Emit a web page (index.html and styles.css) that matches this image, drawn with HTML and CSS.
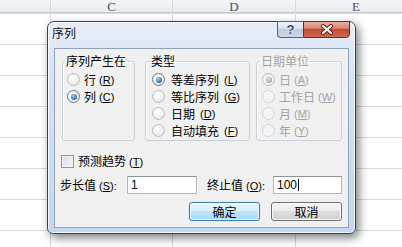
FILE: index.html
```html
<!DOCTYPE html>
<html lang="zh-CN">
<head>
<meta charset="utf-8">
<title>序列</title>
<link rel="stylesheet" href="styles.css">
</head>
<body>
<div class="sheet">
  <div class="grid">
    <div class="hd"></div><div class="hd"><span>C</span></div><div class="hd"><span>D</span></div><div class="hd"><span>E</span></div>
    <div class="c"></div><div class="c"></div><div class="c"></div><div class="c"></div>
    <div class="c"></div><div class="c"></div><div class="c"></div><div class="c"></div>
    <div class="c"></div><div class="c"></div><div class="c"></div><div class="c"></div>
    <div class="c"></div><div class="c"></div><div class="c"></div><div class="c"></div>
    <div class="c"></div><div class="c"></div><div class="c"></div><div class="c"></div>
    <div class="c"></div><div class="c"></div><div class="c"></div><div class="c"></div>
    <div class="c"></div><div class="c"></div><div class="c"></div><div class="c"></div>
    <div class="c"></div><div class="c"></div><div class="c"></div><div class="c"></div>
  </div>

  <div class="dialog">
    <div class="titlebar">
      <span class="title">序列</span>
      <div class="caps">
        <span class="cap help">?</span>
        <span class="cap close">
          <svg width="14" height="11" viewBox="0 0 14 11">
            <path d="M3 2 L11 9 M11 2 L3 9" stroke="#5a1e14" stroke-width="4" stroke-linecap="round"/>
            <path d="M3 2 L11 9 M11 2 L3 9" stroke="#ffffff" stroke-width="2.2" stroke-linecap="round"/>
          </svg>
        </span>
      </div>
    </div>

    <div class="client">
      <div class="groups">
        <fieldset class="grp g1">
          <legend>序列产生在</legend>
          <div class="opt"><span class="radio"></span>行<span class="mn">(<u>R</u>)</span></div>
          <div class="opt"><span class="radio on"></span>列<span class="mn">(<u>C</u>)</span></div>
        </fieldset>
        <fieldset class="grp g2">
          <legend>类型</legend>
          <div class="opt"><span class="radio on"></span>等差序列<span class="mn">(<u>L</u>)</span></div>
          <div class="opt"><span class="radio"></span>等比序列<span class="mn">(<u>G</u>)</span></div>
          <div class="opt"><span class="radio"></span>日期<span class="mn">(<u>D</u>)</span></div>
          <div class="opt"><span class="radio"></span>自动填充<span class="mn">(<u>F</u>)</span></div>
        </fieldset>
        <fieldset class="grp g3 disabled">
          <legend>日期单位</legend>
          <div class="opt"><span class="radio on"></span>日<span class="mn">(<u>A</u>)</span></div>
          <div class="opt"><span class="radio"></span>工作日<span class="mn">(<u>W</u>)</span></div>
          <div class="opt"><span class="radio"></span>月<span class="mn">(<u>M</u>)</span></div>
          <div class="opt"><span class="radio"></span>年<span class="mn">(<u>Y</u>)</span></div>
        </fieldset>
      </div>

      <div class="check"><span class="box"></span><span>预测趋势<span class="mn">(<u>T</u>)</span></span></div>

      <div class="values">
        <span class="lbl">步长值<span class="mn">(<u>S</u>):</span></span>
        <div class="field">1</div>
        <span class="lbl lbl2">终止值<span class="mn">(<u>O</u>):</span></span>
        <div class="field">100<span class="caret"></span></div>
      </div>

      <div class="buttons">
        <div class="btn default">确定</div>
        <div class="btn">取消</div>
      </div>
    </div>
  </div>
</div>
</body>
</html>
```

FILE: styles.css
```css
html, body {
  margin: 0;
  padding: 0;
}

body {
  width: 402px;
  height: 247px;
  overflow: hidden;
  background: #ffffff;
  font-family: "Noto Sans CJK SC", sans-serif;
  font-size: 12px;
  color: #000;
}

.sheet {
  position: relative;
  width: 402px;
  height: 247px;
  overflow: hidden;
}

/* spreadsheet background */
.grid {
  display: grid;
  grid-template-columns: 50px 121px 122px 120px;
  grid-template-rows: 13px repeat(8, 30px);
  gap: 1px;
  background: #d6d9dd;
}

.c {
  background: #ffffff;
}

.hd {
  background: linear-gradient(#f3f5f8, #e6eaf0);
  text-align: center;
  box-shadow: inset 0 -1px 0 #c3cad3;
}

.hd span {
  display: block;
  font-family: "Liberation Serif", serif;
  font-size: 13px;
  line-height: 13px;
  color: #4a4f57;
}

/* dialog window */
.dialog {
  position: absolute;
  left: 47px;
  top: 21px;
  width: 309px;
  height: 213px;
  box-sizing: border-box;
  border: 1px solid #3b4047;
  border-radius: 7px 7px 6px 6px;
  background: linear-gradient(180deg, #e6eef8 0%, #d4e2f3 30%, #c4d7ee 100%);
  box-shadow: 3px 4px 10px rgba(0, 0, 0, 0.5), inset 0 0 0 1px rgba(255, 255, 255, 0.8);
  display: flex;
  flex-direction: column;
}

.titlebar {
  height: 26px;
  display: flex;
  align-items: flex-start;
  padding: 0 5px 0 4px;
  flex: none;
}

.title {
  margin-top: 3px;
  line-height: 16px;
  font-size: 12px;
  color: #111;
}

.caps {
  margin-left: auto;
  margin-top: -1px;
  display: flex;
}

.cap {
  height: 17px;
  box-sizing: border-box;
  display: flex;
  align-items: center;
  justify-content: center;
  border: 1px solid #56637a;
}

.help {
  width: 26px;
  border-right: none;
  border-radius: 0 0 0 4px;
  background: linear-gradient(#eef3f9, #d5e0ee 45%, #bccbe0 50%, #cbd8ea 100%);
  font-family: "Liberation Sans", sans-serif;
  font-weight: bold;
  font-size: 13px;
  line-height: 13px;
  color: #3b4a66;
  text-shadow: 0 0 2px #ffffff, 0 0 1px #ffffff;
}

.close {
  width: 47px;
  border-color: #6e2a1f;
  border-radius: 0 0 4px 0;
  background: linear-gradient(#eab0a2, #d88470 42%, #c24a32 50%, #cf6a4e 100%);
}

.client {
  flex: 1;
  margin: 0 6px 5px 6px;
  box-sizing: border-box;
  border: 1px solid #8fa3bd;
  background: #f0f0f0;
  display: flex;
  flex-direction: column;
  padding: 0 6px 0 6px;
}

/* mnemonic suffix like (R) */
.mn {
  font-family: "Liberation Sans", sans-serif;
  font-size: 11px;
  margin-left: 3px;
}

/* group boxes */
.groups {
  display: flex;
  margin-top: 5px;
  margin-left: 1px;
}

.grp {
  margin: 0;
  padding: 0 0 0 4px;
  border: 1px solid #c9cfd6;
  border-radius: 3px;
  box-shadow: inset 1px 1px 0 #ffffff;
  box-sizing: border-box;
  height: 87px;
  min-width: 0;
}

.grp legend {
  padding: 0 1px;
  margin-left: -2px;
  line-height: 14px;
  font-size: 12px;
}

.g1 { width: 73px; }
.g2 { width: 105px; margin-left: 10px; padding-left: 6px; }
.g3 { width: 86px; margin-left: 6px; padding-left: 5px; }

.opt {
  display: flex;
  align-items: center;
  gap: 4px;
  height: 17px;
  line-height: 16px;
  white-space: nowrap;
}

.opt .mn {
  margin-left: -1px;
}

.grp legend + .opt {
  margin-top: 3px;
}

.g2 .opt { gap: 6px; }

.radio {
  width: 13px;
  height: 13px;
  box-sizing: border-box;
  border-radius: 50%;
  border: 1px solid #b6bbc1;
  background: radial-gradient(circle at 40% 35%, #ffffff 0%, #f1f1f1 50%, #dcdcdc 100%);
  display: flex;
  align-items: center;
  justify-content: center;
  flex: none;
}

.radio.on {
  border-color: #6c7684;
}

.radio.on::after {
  content: "";
  width: 6px;
  height: 6px;
  border-radius: 50%;
  background: radial-gradient(circle at 40% 35%, #a9d1f5 0%, #3c7fc4 55%, #1d4a84 100%);
}

.disabled {
  color: #a3a3a3;
}

.disabled .radio {
  border-color: #d0d3d6;
  background: #f4f4f4;
}

.disabled .radio.on {
  border-color: #b9bcc0;
}

.disabled .radio.on::after {
  background: radial-gradient(circle at 40% 35%, #e2e2e2 0%, #b0b0b0 60%, #9a9a9a 100%);
}

/* checkbox */
.check {
  display: flex;
  align-items: center;
  gap: 4px;
  margin-top: 13px;
  height: 14px;
  line-height: 16px;
  white-space: nowrap;
}

.box {
  width: 13px;
  height: 13px;
  box-sizing: border-box;
  border: 1px solid #8e9399;
  background: linear-gradient(135deg, #dcdcdc, #f6f6f6);
  box-shadow: inset 0 0 0 1px #f4f4f4;
  flex: none;
}

/* value inputs */
.values {
  display: grid;
  grid-template-columns: 67px 70px 76px 69px;
  align-items: center;
  margin-top: 8px;
  margin-left: -1px;
  height: 18px;
}

.lbl {
  line-height: 16px;
  white-space: nowrap;
}

.lbl2 {
  padding-left: 10px;
}

.field {
  height: 18px;
  box-sizing: border-box;
  border: 1px solid #b3b7bd;
  border-top-color: #8f949b;
  background: #ffffff;
  padding-left: 3px;
  line-height: 16px;
  font-family: "Liberation Sans", sans-serif;
  font-size: 12px;
  display: flex;
  align-items: center;
}

.caret {
  display: inline-block;
  width: 1px;
  height: 12px;
  background: #000;
  margin-left: 1px;
}

/* buttons */
.buttons {
  display: flex;
  justify-content: flex-end;
  gap: 11px;
  margin-top: 8px;
}

.btn {
  width: 71px;
  height: 19px;
  box-sizing: border-box;
  border: 1px solid #707070;
  border-radius: 3px;
  background: linear-gradient(#f4f4f4, #ebebeb 45%, #dddddd 50%, #cfcfcf 100%);
  box-shadow: inset 0 0 0 1px rgba(255, 255, 255, 0.8);
  text-align: center;
  line-height: 17px;
  font-size: 12px;
}

.btn.default {
  border-color: #3c7fb1;
  background: linear-gradient(#eaf6fd, #d9f0fc 45%, #bee6fd 50%, #a7d9f5 100%);
  box-shadow: inset 0 0 0 1px rgba(255, 255, 255, 0.7), 0 0 1px #7fc4ec;
}
```
